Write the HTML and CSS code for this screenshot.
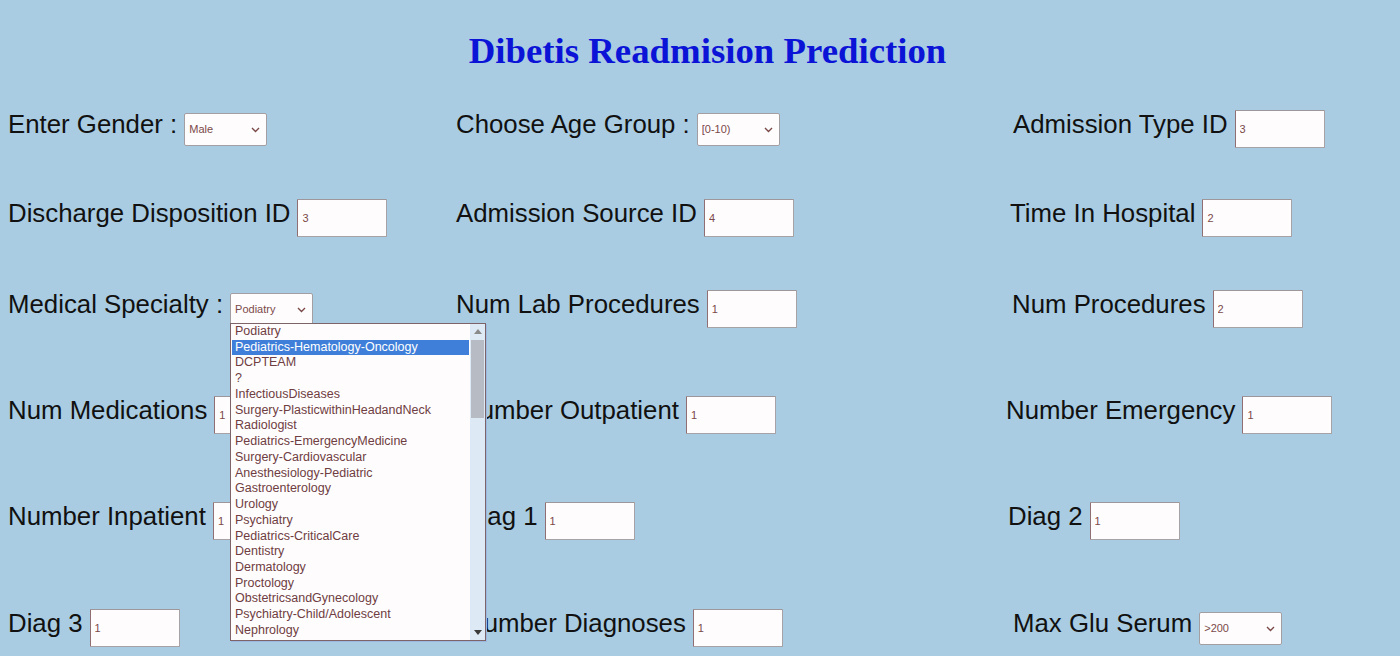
FILE: index.html
```html
<!DOCTYPE html>
<html lang="en">
<head>
<meta charset="utf-8">
<title>Dibetis Readmision Prediction</title>
<link rel="stylesheet" href="styles.css">
</head>
<body>
<div class="page">
  <h1 class="title">Dibetis Readmision Prediction</h1>
  <form class="form">
    <div class="row row-1">
      <div class="cell">
        <label class="label">Enter Gender :</label>
        <span class="select-wrap"><select class="select"><option>Male</option><option>Female</option></select><svg class="chev" width="9" height="6" viewBox="0 0 9 6"><path d="M1 1l3.5 3.5L8 1" fill="none" stroke="#7a4a4a" stroke-width="1.4"/></svg></span>
      </div>
      <div class="cell">
        <label class="label">Choose Age Group :</label>
        <span class="select-wrap"><select class="select"><option>[0-10)</option></select><svg class="chev" width="9" height="6" viewBox="0 0 9 6"><path d="M1 1l3.5 3.5L8 1" fill="none" stroke="#7a4a4a" stroke-width="1.4"/></svg></span>
      </div>
      <div class="cell">
        <label class="label">Admission Type ID</label>
        <input class="input" type="text" value="3">
      </div>
    </div>

    <div class="row row-2">
      <div class="cell">
        <label class="label">Discharge Disposition ID</label>
        <input class="input" type="text" value="3">
      </div>
      <div class="cell">
        <label class="label">Admission Source ID</label>
        <input class="input" type="text" value="4">
      </div>
      <div class="cell shift-l3">
        <label class="label">Time In Hospital</label>
        <input class="input" type="text" value="2">
      </div>
    </div>

    <div class="row row-3">
      <div class="cell">
        <label class="label">Medical Specialty :</label>
        <span class="select-wrap"><select class="select"><option>Podiatry</option></select><svg class="chev" width="9" height="6" viewBox="0 0 9 6"><path d="M1 1l3.5 3.5L8 1" fill="none" stroke="#7a4a4a" stroke-width="1.4"/></svg></span>
      </div>
      <div class="cell">
        <label class="label">Num Lab Procedures</label>
        <input class="input" type="text" value="1">
      </div>
      <div class="cell shift-l1">
        <label class="label">Num Procedures</label>
        <input class="input" type="text" value="2">
      </div>
    </div>

    <div class="row row-4">
      <div class="cell">
        <label class="label">Num Medications</label>
        <input class="input" type="text" value="1">
      </div>
      <div class="cell shift-r5">
        <label class="label">Number Outpatient</label>
        <input class="input" type="text" value="1">
      </div>
      <div class="cell shift-l7">
        <label class="label">Number Emergency</label>
        <input class="input" type="text" value="1">
      </div>
    </div>

    <div class="row row-5">
      <div class="cell">
        <label class="label">Number Inpatient</label>
        <input class="input" type="text" value="1">
      </div>
      <div class="cell shift-r7">
        <label class="label">Diag 1</label>
        <input class="input" type="text" value="1">
      </div>
      <div class="cell shift-l5">
        <label class="label">Diag 2</label>
        <input class="input" type="text" value="1">
      </div>
    </div>

    <div class="row row-6">
      <div class="cell">
        <label class="label">Diag 3</label>
        <input class="input" type="text" value="1">
      </div>
      <div class="cell shift-r9">
        <label class="label">Number Diagnoses</label>
        <input class="input" type="text" value="1">
      </div>
      <div class="cell">
        <label class="label">Max Glu Serum</label>
        <span class="select-wrap"><select class="select"><option>&gt;200</option></select><svg class="chev" width="9" height="6" viewBox="0 0 9 6"><path d="M1 1l3.5 3.5L8 1" fill="none" stroke="#7a4a4a" stroke-width="1.4"/></svg></span>
      </div>
    </div>
  </form>

  <div class="popup" role="listbox">
    <div class="popup-list">
      <div class="opt">Podiatry</div>
      <div class="opt opt-active">Pediatrics-Hematology-Oncology</div>
      <div class="opt">DCPTEAM</div>
      <div class="opt">?</div>
      <div class="opt">InfectiousDiseases</div>
      <div class="opt">Surgery-PlasticwithinHeadandNeck</div>
      <div class="opt">Radiologist</div>
      <div class="opt">Pediatrics-EmergencyMedicine</div>
      <div class="opt">Surgery-Cardiovascular</div>
      <div class="opt">Anesthesiology-Pediatric</div>
      <div class="opt">Gastroenterology</div>
      <div class="opt">Urology</div>
      <div class="opt">Psychiatry</div>
      <div class="opt">Pediatrics-CriticalCare</div>
      <div class="opt">Dentistry</div>
      <div class="opt">Dermatology</div>
      <div class="opt">Proctology</div>
      <div class="opt">ObstetricsandGynecology</div>
      <div class="opt">Psychiatry-Child/Adolescent</div>
      <div class="opt">Nephrology</div>
    </div>
    <div class="scrollbar">
      <svg class="sb-arrow" width="8" height="5" viewBox="0 0 8 5"><path d="M0 5L4 0L8 5Z" fill="#8a8a8a"/></svg>
      <div class="sb-thumb"></div>
      <div class="sb-track"></div>
      <svg class="sb-arrow" width="8" height="5" viewBox="0 0 8 5"><path d="M0 0L4 5L8 0Z" fill="#3a3a3a"/></svg>
    </div>
  </div>
</div>
</body>
</html>
```

FILE: styles.css
```css
html, body {
  margin: 0;
  padding: 0;
}

body {
  background: #a9cce3;
  font-family: "Liberation Sans", Arial, sans-serif;
  color: #111;
  width: 1400px;
  height: 656px;
  overflow: hidden;
}

.page {
  position: relative;
  padding-left: 8px;
}

.title {
  margin: 0;
  padding-top: 30px;
  padding-left: 7px;
  font-family: "Liberation Serif", "Times New Roman", serif;
  font-weight: bold;
  font-size: 36.8px;
  line-height: 42px;
  color: #0b14d6;
  text-align: center;
}

.form {
  margin-top: 38px;
}

.row {
  display: grid;
  grid-template-columns: 448px 557px 1fr;
  align-items: baseline;
}

.row-1 { height: 89px; }
.row-2 { height: 91px; }
.row-3 { height: 106px; }
.row-4 { height: 106px; }
.row-5 { height: 107px; }
.row-6 { height: 47px; }

.cell {
  display: flex;
  align-items: baseline;
  gap: 7px;
}

.shift-l1 { margin-left: -1px; }
.shift-l3 { margin-left: -3px; }
.shift-l5 { margin-left: -5px; }
.shift-l7 { margin-left: -7px; }
.shift-r5 { margin-left: 5px; }
.shift-r7 { margin-left: 7px; }
.shift-r9 { margin-left: 9px; }

.label {
  font-size: 25.8px;
  color: #111;
  white-space: nowrap;
}

.input {
  box-sizing: border-box;
  width: 90px;
  height: 38px;
  margin: 0;
  padding: 0 4px;
  border: 1px solid #a7a2a6;
  border-left-color: #8f6f73;
  border-top-color: #9d979b;
  background: #fffcfd;
  font-family: "Liberation Sans", Arial, sans-serif;
  font-size: 11px;
  color: #7a4a4a;
  border-radius: 1px;
}

.select-wrap {
  position: relative;
  display: inline-flex;
  align-items: baseline;
}

.select {
  -webkit-appearance: none;
  appearance: none;
  box-sizing: border-box;
  width: 83px;
  height: 33px;
  margin: 0;
  padding: 0 16px 0 4px;
  border: 1px solid #a39ea2;
  border-radius: 2px;
  background: #fffcfd;
  font-family: "Liberation Sans", Arial, sans-serif;
  font-size: 11px;
  color: #7a4a4a;
}

.chev {
  position: absolute;
  right: 7px;
  top: 14px;
  pointer-events: none;
}

/* open dropdown overlay */
.popup {
  position: absolute;
  left: 230px;
  top: 323px;
  box-sizing: border-box;
  width: 256px;
  height: 318px;
  border: 1px solid #7d6468;
  background: #fffcfd;
  display: flex;
  box-shadow: 1px 1px 0 #9bb8e0;
}

.popup-list {
  flex: 1;
  padding: 0 1px;
  overflow: hidden;
}

.opt {
  height: 15.74px;
  line-height: 15.74px;
  padding-left: 3px;
  font-size: 12.5px;
  color: #6e3e42;
  white-space: nowrap;
}

.opt-active {
  background: #3f7fd9;
  color: #ffffff;
}

.scrollbar {
  width: 15px;
  display: flex;
  flex-direction: column;
  align-items: center;
  background: #dde9f4;
}

.sb-arrow {
  flex: none;
  margin: 5px 0 6px;
}

.sb-arrow:last-child {
  margin: 5px 0 5px;
}

.sb-thumb {
  flex: none;
  width: 13px;
  height: 78px;
  background: #b7bcc4;
}

.sb-track {
  flex: 1;
}
```
